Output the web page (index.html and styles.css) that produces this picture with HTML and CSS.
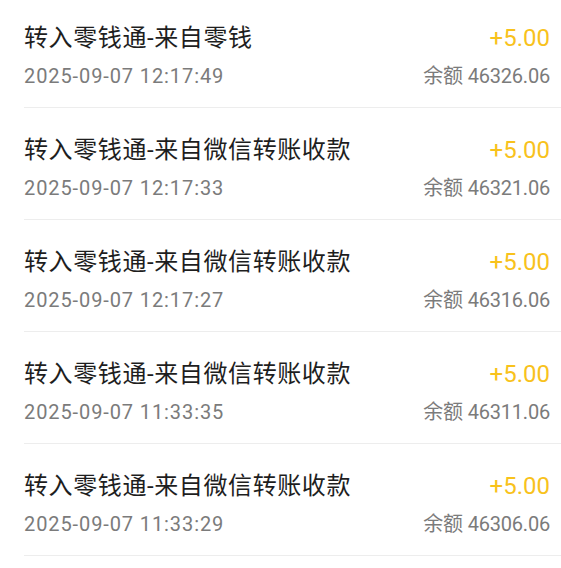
FILE: index.html
```html
<!DOCTYPE html>
<html lang="zh-CN">
<head>
    <meta charset="UTF-8">
    <meta name="viewport" content="width=device-width, initial-scale=1.0">
    <title>零钱通明细</title>
    <link rel="stylesheet" href="styles.css">
</head>
<body>
    <ul class="record-list">
        <li class="record">
            <div class="record-line">
                <span class="record-title">转入零钱通-来自零钱</span>
                <span class="record-amount">+5.00</span>
            </div>
            <div class="record-line record-sub">
                <span class="record-time">2025-09-07 12:17:49</span>
                <span class="record-balance">余额 46326.06</span>
            </div>
        </li>
        <li class="record">
            <div class="record-line">
                <span class="record-title">转入零钱通-来自微信转账收款</span>
                <span class="record-amount">+5.00</span>
            </div>
            <div class="record-line record-sub">
                <span class="record-time">2025-09-07 12:17:33</span>
                <span class="record-balance">余额 46321.06</span>
            </div>
        </li>
        <li class="record">
            <div class="record-line">
                <span class="record-title">转入零钱通-来自微信转账收款</span>
                <span class="record-amount">+5.00</span>
            </div>
            <div class="record-line record-sub">
                <span class="record-time">2025-09-07 12:17:27</span>
                <span class="record-balance">余额 46316.06</span>
            </div>
        </li>
        <li class="record">
            <div class="record-line">
                <span class="record-title">转入零钱通-来自微信转账收款</span>
                <span class="record-amount">+5.00</span>
            </div>
            <div class="record-line record-sub">
                <span class="record-time">2025-09-07 11:33:35</span>
                <span class="record-balance">余额 46311.06</span>
            </div>
        </li>
        <li class="record">
            <div class="record-line">
                <span class="record-title">转入零钱通-来自微信转账收款</span>
                <span class="record-amount">+5.00</span>
            </div>
            <div class="record-line record-sub">
                <span class="record-time">2025-09-07 11:33:29</span>
                <span class="record-balance">余额 46306.06</span>
            </div>
        </li>
    </ul>
</body>
</html>
```

FILE: styles.css
```css
* {
    margin: 0;
    padding: 0;
    box-sizing: border-box;
}

body {
    font-family: 'Roboto', 'Noto Sans CJK SC', sans-serif;
    background: #fff;
}

.record-list {
    list-style: none;
    padding-left: 24px;
}

.record {
    padding: 26px 11px 18px 0;
    border-bottom: 1px solid #ededed;
}

.record:first-child {
    padding-top: 22px;
}

.record-line {
    display: flex;
    justify-content: space-between;
    align-items: baseline;
    height: 32px;
    line-height: 32px;
}

.record-sub {
    height: 26px;
    line-height: 26px;
    margin-top: 9px;
}

.record-title {
    font-size: 24px;
    letter-spacing: 0.6px;
    color: #1e1e1e;
}

.record-amount {
    font-size: 24px;
    color: #f8c21c;
}

.record-time,
.record-balance {
    font-size: 20px;
    color: #7b7b7b;
}

.record-time {
    letter-spacing: 0.9px;
}

.record-balance {
    letter-spacing: -0.2px;
}
```
